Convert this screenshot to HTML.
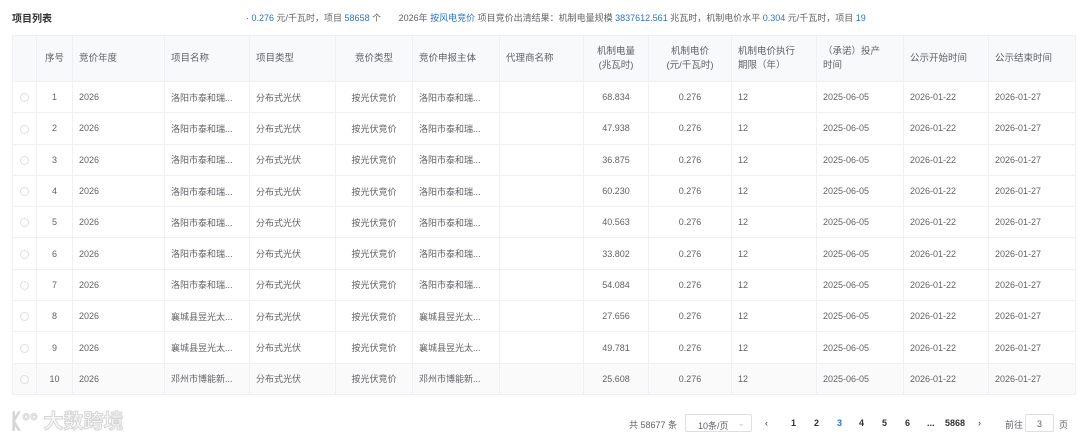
<!DOCTYPE html>
<html><head><meta charset="utf-8"><style>
*{margin:0;padding:0;box-sizing:border-box}
body{width:1080px;height:440px;background:#fff;font-family:"Liberation Sans","Noto Sans CJK SC",sans-serif;color:#606266;font-size:9px;position:relative;overflow:hidden}
.title{position:absolute;left:12px;top:10px;font-size:10px;font-weight:bold;color:#303133}
.sum{position:absolute;left:246px;top:11px;font-size:9px;color:#606266;white-space:nowrap}
.b{color:#2c73c4}
table{position:absolute;left:12px;top:35px;border-collapse:collapse;table-layout:fixed;width:1063px}
td,th{border:1px solid #eef0f4;padding:0 6px;white-space:nowrap;overflow:hidden;font-weight:normal}
th{height:46px;background:#f8f9fb;color:#606266;text-align:left;font-size:9.5px;line-height:14px}
td{height:31.3px;text-align:left;background:#fff}
.c{text-align:center}
.r{display:inline-block;width:9px;height:9px;border:1px solid #dcdfe6;border-radius:50%;vertical-align:middle}
.logo{position:absolute;left:10px;top:405px;font-size:20px;color:#f7f7f7;-webkit-text-stroke:1px #d6d6d6;font-weight:bold;letter-spacing:0px}
.pg{position:absolute;top:416px;font-size:9px;color:#606266}
.n{position:absolute;top:418px;font-size:9px;font-weight:bold;color:#303133}
.box{position:absolute;border:1px solid #dcdfe6;border-radius:2px;height:18px}
</style></head><body>
<div class="title">项目列表</div>
<div class="sum">· <span class="b">0.276</span> 元/千瓦时，项目 <span class="b">58658</span> 个 &nbsp;&nbsp;&nbsp;&nbsp;&nbsp; 2026年 <span class="b">按风电竞价</span> 项目竞价出清结果：机制电量规模 <span class="b">3837612.561</span> 兆瓦时，机制电价水平 <span class="b">0.304</span> 元/千瓦时，项目 <span class="b">19</span></div>
<table>
<colgroup><col style="width:24px"><col style="width:36px"><col style="width:92px"><col style="width:85px"><col style="width:86px"><col style="width:77px"><col style="width:87px"><col style="width:84px"><col style="width:65px"><col style="width:83px"><col style="width:85px"><col style="width:87px"><col style="width:85px"><col style="width:87px"></colgroup>
<tr><th></th><th class="c">序号</th><th>竞价年度</th><th>项目名称</th><th>项目类型</th><th class="c">竞价类型</th><th>竞价申报主体</th><th>代理商名称</th><th class="c">机制电量<br>(兆瓦时)</th><th class="c">机制电价<br>(元/千瓦时)</th><th>机制电价执行<br>期限（年）</th><th>（承诺）投产<br>时间</th><th>公示开始时间</th><th>公示结束时间</th></tr>
<tr><td class="c"><span class="r"></span></td><td class="c">1</td><td>2026</td><td>洛阳市泰和瑞...</td><td>分布式光伏</td><td class="c">按光伏竞价</td><td>洛阳市泰和瑞...</td><td></td><td class="c">68.834</td><td class="c">0.276</td><td>12</td><td>2025-06-05</td><td>2026-01-22</td><td>2026-01-27</td></tr>
<tr><td class="c"><span class="r"></span></td><td class="c">2</td><td>2026</td><td>洛阳市泰和瑞...</td><td>分布式光伏</td><td class="c">按光伏竞价</td><td>洛阳市泰和瑞...</td><td></td><td class="c">47.938</td><td class="c">0.276</td><td>12</td><td>2025-06-05</td><td>2026-01-22</td><td>2026-01-27</td></tr>
<tr><td class="c"><span class="r"></span></td><td class="c">3</td><td>2026</td><td>洛阳市泰和瑞...</td><td>分布式光伏</td><td class="c">按光伏竞价</td><td>洛阳市泰和瑞...</td><td></td><td class="c">36.875</td><td class="c">0.276</td><td>12</td><td>2025-06-05</td><td>2026-01-22</td><td>2026-01-27</td></tr>
<tr><td class="c"><span class="r"></span></td><td class="c">4</td><td>2026</td><td>洛阳市泰和瑞...</td><td>分布式光伏</td><td class="c">按光伏竞价</td><td>洛阳市泰和瑞...</td><td></td><td class="c">60.230</td><td class="c">0.276</td><td>12</td><td>2025-06-05</td><td>2026-01-22</td><td>2026-01-27</td></tr>
<tr><td class="c"><span class="r"></span></td><td class="c">5</td><td>2026</td><td>洛阳市泰和瑞...</td><td>分布式光伏</td><td class="c">按光伏竞价</td><td>洛阳市泰和瑞...</td><td></td><td class="c">40.563</td><td class="c">0.276</td><td>12</td><td>2025-06-05</td><td>2026-01-22</td><td>2026-01-27</td></tr>
<tr><td class="c"><span class="r"></span></td><td class="c">6</td><td>2026</td><td>洛阳市泰和瑞...</td><td>分布式光伏</td><td class="c">按光伏竞价</td><td>洛阳市泰和瑞...</td><td></td><td class="c">33.802</td><td class="c">0.276</td><td>12</td><td>2025-06-05</td><td>2026-01-22</td><td>2026-01-27</td></tr>
<tr><td class="c"><span class="r"></span></td><td class="c">7</td><td>2026</td><td>洛阳市泰和瑞...</td><td>分布式光伏</td><td class="c">按光伏竞价</td><td>洛阳市泰和瑞...</td><td></td><td class="c">54.084</td><td class="c">0.276</td><td>12</td><td>2025-06-05</td><td>2026-01-22</td><td>2026-01-27</td></tr>
<tr><td class="c"><span class="r"></span></td><td class="c">8</td><td>2026</td><td>襄城县昱光太...</td><td>分布式光伏</td><td class="c">按光伏竞价</td><td>襄城县昱光太...</td><td></td><td class="c">27.656</td><td class="c">0.276</td><td>12</td><td>2025-06-05</td><td>2026-01-22</td><td>2026-01-27</td></tr>
<tr><td class="c"><span class="r"></span></td><td class="c">9</td><td>2026</td><td>襄城县昱光太...</td><td>分布式光伏</td><td class="c">按光伏竞价</td><td>襄城县昱光太...</td><td></td><td class="c">49.781</td><td class="c">0.276</td><td>12</td><td>2025-06-05</td><td>2026-01-22</td><td>2026-01-27</td></tr>
<tr><td class="c" style="background:#fafafa"><span class="r"></span></td><td class="c" style="background:#fafafa">10</td><td style="background:#fafafa">2026</td><td style="background:#fafafa">邓州市博能新...</td><td style="background:#fafafa">分布式光伏</td><td class="c" style="background:#fafafa">按光伏竞价</td><td style="background:#fafafa">邓州市博能新...</td><td style="background:#fafafa"></td><td class="c" style="background:#fafafa">25.608</td><td class="c" style="background:#fafafa">0.276</td><td style="background:#fafafa">12</td><td style="background:#fafafa">2025-06-05</td><td style="background:#fafafa">2026-01-22</td><td style="background:#fafafa">2026-01-27</td></tr>
</table>
<div class="logo">ᛕ°° 大数跨境</div>
<div class="pg" style="left:629px;top:418px">共 58677 条</div>
<div class="box" style="left:685px;top:414px;width:67px"><span style="position:absolute;left:12px;top:4px">10条/页</span><span style="position:absolute;right:6px;top:3px;color:#c0c4cc">⌄</span></div>
<div class="n" style="left:765px;font-weight:normal">‹</div>
<div class="n" style="left:791px">1</div>
<div class="n" style="left:814px">2</div>
<div class="n" style="left:837px;color:#2c73c4">3</div>
<div class="n" style="left:859px">4</div>
<div class="n" style="left:882px">5</div>
<div class="n" style="left:905px">6</div>
<div class="n" style="left:927px">...</div>
<div class="n" style="left:945px">5868</div>
<div class="n" style="left:978px;font-weight:normal">›</div>
<div class="pg" style="left:1005px;top:418px">前往</div>
<div class="box" style="left:1025px;top:414px;width:29px;text-align:center;padding-top:4px">3</div>
<div class="pg" style="left:1059px;top:418px">页</div>
</body></html>
